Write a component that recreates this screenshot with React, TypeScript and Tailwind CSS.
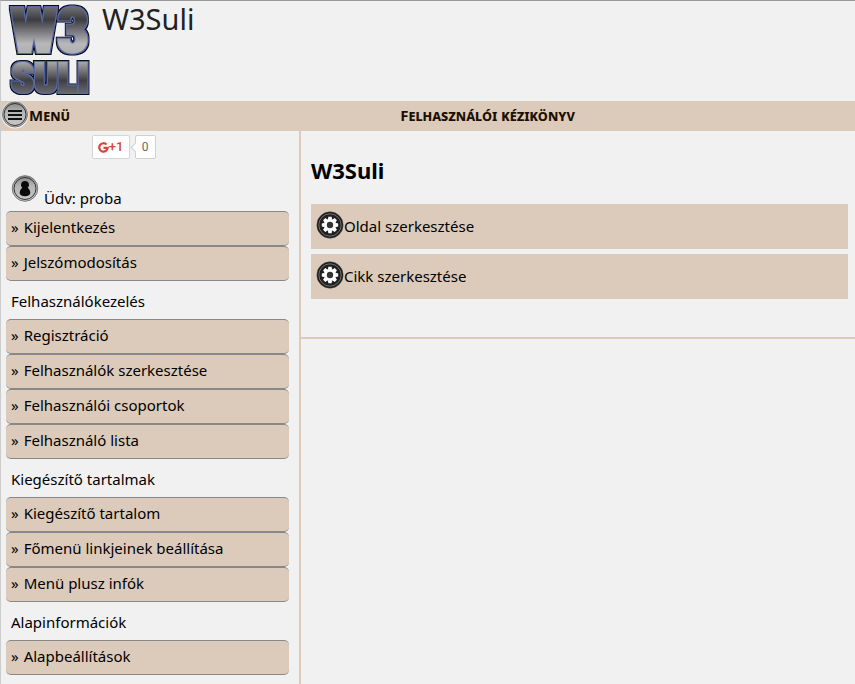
import { useState } from 'react'

type MenuSection = {
  title?: string
  items: string[]
}

const sections: MenuSection[] = [
  { items: ['Kijelentkezés', 'Jelszómodosítás'] },
  {
    title: 'Felhasználókezelés',
    items: ['Regisztráció', 'Felhasználók szerkesztése', 'Felhasználói csoportok', 'Felhasználó lista']
  },
  {
    title: 'Kiegészítő tartalmak',
    items: ['Kiegészítő tartalom', 'Főmenü linkjeinek beállítása', 'Menü plusz infók']
  },
  { title: 'Alapinformációk', items: ['Alapbeállítások'] }
]

function Logo() {
  return (
    <svg className="h-[100px] w-[93px] shrink-0" viewBox="0 0 93 100" role="img" aria-label="W3Suli">
      <defs>
        <linearGradient id="metal" gradientUnits="userSpaceOnUse" x1="0" y1="4" x2="0" y2="96">
          <stop offset="0" stopColor="#77777c" />
          <stop offset="0.16" stopColor="#3c3c42" />
          <stop offset="0.42" stopColor="#b8b8ba" />
          <stop offset="0.62" stopColor="#a8a8aa" />
          <stop offset="0.82" stopColor="#3e3e44" />
          <stop offset="1" stopColor="#77777c" />
        </linearGradient>
        <filter id="outline" x="-10%" y="-10%" width="120%" height="120%">
          <feMorphology in="SourceAlpha" operator="dilate" radius="2" result="dark" />
          <feFlood floodColor="#0b0b14" />
          <feComposite in2="dark" operator="in" result="edge" />
          <feMorphology in="SourceAlpha" operator="dilate" radius="1" result="mid" />
          <feFlood floodColor="#5a6aa4" />
          <feComposite in2="mid" operator="in" result="rim" />
          <feMerge>
            <feMergeNode in="edge" />
            <feMergeNode in="rim" />
            <feMergeNode in="SourceGraphic" />
          </feMerge>
        </filter>
      </defs>
      <g
        fill="url(#metal)"
        stroke="url(#metal)"
        strokeWidth="2"
        filter="url(#outline)"
        fontFamily="Roboto Condensed, Roboto, sans-serif"
        fontWeight="900"
        textAnchor="middle"
      >
        <text x="49" y="51" fontSize="62">W3</text>
        <text x="49" y="91" fontSize="41">SULI</text>
      </g>
    </svg>
  )
}

function MenuIcon() {
  return (
    <svg className="size-[28px] shrink-0" viewBox="0 0 28 28" aria-hidden="true">
      <defs>
        <linearGradient id="disc" x1="0" y1="0" x2="0" y2="1">
          <stop offset="0" stopColor="#858585" />
          <stop offset="0.4" stopColor="#b5b5b5" />
          <stop offset="1" stopColor="#c9c9c9" />
        </linearGradient>
      </defs>
      <circle cx="14" cy="14" r="13.5" fill="#f4f4f4" />
      <circle cx="14" cy="13.5" r="12.5" fill="url(#disc)" stroke="#777" />
      <circle cx="14" cy="13.5" r="11" fill="none" stroke="#333" />
      <path d="M7 10h14M7 14h14M7 18h14" stroke="#111" strokeWidth="2" />
    </svg>
  )
}

function UserIcon() {
  return (
    <svg className="size-[28px] shrink-0" viewBox="0 0 28 28" aria-hidden="true">
      <circle cx="14" cy="14" r="13.5" fill="#fafafa" />
      <circle cx="14" cy="13.5" r="12.8" fill="url(#disc)" stroke="#777" />
      <circle cx="14" cy="13.5" r="11" fill="none" stroke="#333" />
      <path
        d="M14 6c2.400 0 4 1.600 4 3.700 0 1.300-.6 2.300-1.400 3 1.700 1 2.700 3 2.700 5.300 0 2-2 3.200-5.300 3.200S8.700 20 8.700 18c0-2.300 1-4.300 2.700-5.300-.8-.7-1.400-1.700-1.400-3C10 7.600 11.600 6 14 6z"
        fill="#0a0a0a"
      />
    </svg>
  )
}

function GearIcon() {
  return (
    <svg className="size-[28px] shrink-0" viewBox="0 0 28 28" aria-hidden="true">
      <circle cx="14" cy="14" r="13.2" fill="#191919" stroke="#555" strokeWidth="0.500" />
      <circle cx="14" cy="14" r="11.200" fill="#202020" stroke="#888" strokeWidth="0.800" />
      <g fill="#fff">
        <circle cx="14" cy="14" r="6" />
        <path d="M12.400 5.800h3.200l.6 3h-4.400zM12.400 22.200h3.200l.6-3h-4.400zM5.800 12.400v3.200l3 .6v-4.400zM22.200 12.400v3.200l-3 .6v-4.400z" />
        <path
          transform="rotate(45 14 14)"
          d="M12.400 5.800h3.200l.6 3h-4.400zM12.400 22.200h3.200l.6-3h-4.400zM5.800 12.400v3.200l3 .6v-4.400zM22.200 12.400v3.200l-3 .6v-4.400z"
        />
      </g>
      <circle cx="14" cy="14" r="3.200" fill="#333" />
    </svg>
  )
}

function PlusOne() {
  const [count, setCount] = useState(0)

  return (
    <div className="flex h-6 justify-center gap-[5px] pr-12">
      <button
        type="button"
        aria-label="G+1"
        onClick={() => setCount(count + 1)}
        className="flex h-6 w-[38px] items-center justify-center rounded-[2px] border border-[#d5d5d5] bg-white font-['Roboto',sans-serif] text-[13px] font-medium text-[#db4437]"
      >
        <svg className="size-[11px]" viewBox="0 0 12 12" aria-hidden="true">
          <path d="M9.300 2.700A4.600 4.600 0 1 0 10.600 6.500H6" fill="none" stroke="#db4437" strokeWidth="2.400" />
        </svg>
        +1
      </button>
      <span className="relative flex h-6 w-[21px] items-center justify-center rounded-[2px] border border-[#d0d0d0] bg-white font-['Roboto',sans-serif] text-xs text-[#666]">
        <span className="absolute top-2 -left-1 size-[7px] rotate-45 border-b border-l border-[#d0d0d0] bg-white" />
        {count}
      </span>
    </div>
  )
}

export default function App() {
  const [menuOpen, setMenuOpen] = useState(true)

  return (
    <div className="flex min-h-screen flex-col border-t border-l border-t-[#999] border-l-[#ccc] bg-[#f1f1f1] font-['Noto_Sans',sans-serif] text-[15px] leading-5 text-black">
      <header className="flex h-[100px] items-start gap-2">
        <Logo />
        <span className="text-[29px] leading-9 text-[#222]">W3Suli</span>
      </header>

      <nav className="flex h-[30px] items-center bg-[#dccbbb] pb-[2px] font-bold text-[#1e0f00] [font-variant:small-caps]">
        <button
          type="button"
          aria-expanded={menuOpen}
          onClick={() => setMenuOpen(!menuOpen)}
          className="flex w-[119px] items-center font-bold [font-variant:small-caps]"
        >
          <MenuIcon />
          Menü
        </button>
        <div className="flex-1 text-center">
          <a href="#kezikonyv">Felhasználói kézikönyv</a>
        </div>
      </nav>

      <div className="flex flex-1">
        {menuOpen && (
          <aside className="w-[300px] shrink-0 border-r-2 border-[#dccbbb] pt-1 pr-[10px] pl-[5px]">
            <PlusOne />
            <div className="mt-4 flex h-9 items-start gap-[5px] pl-[5px]">
              <UserIcon />
              <span className="pt-[13px]">Üdv: proba</span>
            </div>
            {sections.map((section) => (
              <section key={section.items[0]}>
                {section.title && <h2 className="h-[38px] pt-[10px] pl-[5px]">{section.title}</h2>}
                <ul>
                  {section.items.map((item) => (
                    <li key={item}>
                      <a
                        href="#"
                        className="flex h-[35px] items-center gap-[5px] rounded-[5px] border-y border-[#888] bg-[#dccbbb] px-[5px] pb-[3px]"
                      >
                        <span>»</span>
                        <span>{item}</span>
                      </a>
                    </li>
                  ))}
                </ul>
              </section>
            ))}
          </aside>
        )}

        <main className="min-w-0 flex-1">
          <article className="border-b-2 border-[#dccbbb] pt-[23px] pr-[7px] pb-[38px] pl-[10px]">
            <h1 className="mb-[18px] text-[22px] leading-8 font-bold">W3Suli</h1>
            <div className="flex flex-col gap-[5px]">
              {['Oldal szerkesztése', 'Cikk szerkesztése'].map((label) => (
                <button
                  key={label}
                  type="button"
                  className="flex h-[45px] items-center bg-[#dccbbb] px-[5px] pb-[3px] text-left"
                >
                  <GearIcon />
                  <span className="pt-[2px]">{label}</span>
                </button>
              ))}
            </div>
          </article>
        </main>
      </div>
    </div>
  )
}
